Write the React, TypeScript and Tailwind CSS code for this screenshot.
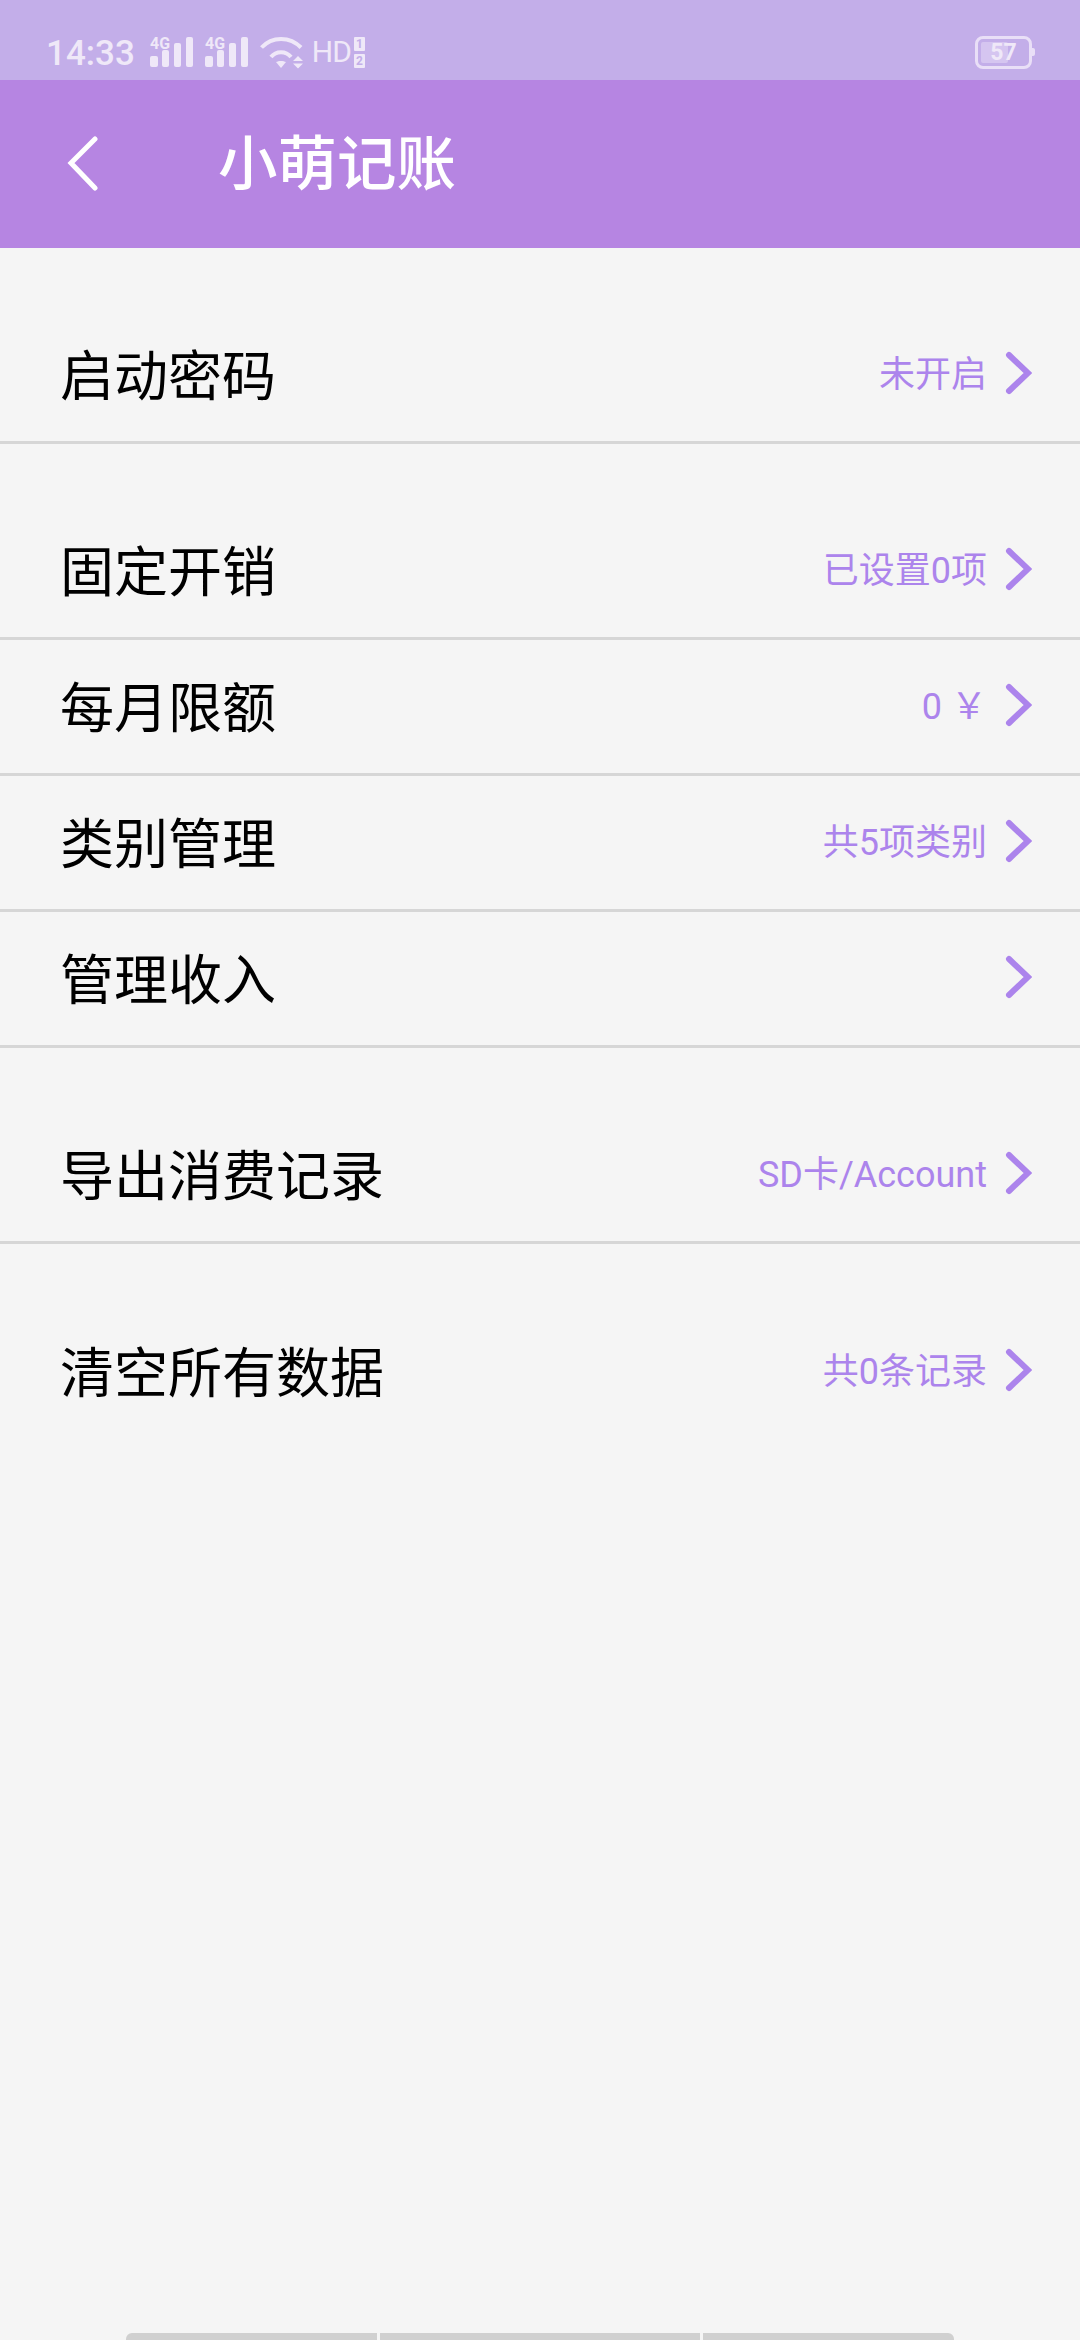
import React from "react";

const font = "font-['Roboto','Noto_Sans_CJK_SC',sans-serif]";

type Row = { title: string; value?: string };

const sections: Row[][] = [
  [{ title: "启动密码", value: "未开启" }],
  [
    { title: "固定开销", value: "已设置0项" },
    { title: "每月限额", value: "0 ￥" },
    { title: "类别管理", value: "共5项类别" },
    { title: "管理收入" },
  ],
  [{ title: "导出消费记录", value: "SD卡/Account" }],
  [{ title: "清空所有数据", value: "共0条记录" }],
];

function SignalIcon() {
  return (
    <svg width="44" height="31" viewBox="0 0 44 31" className="shrink-0 overflow-visible">
      <text x="0" y="12" fontSize="16" fontWeight="700" fill="#efe8f8" fontFamily="Roboto, sans-serif" textLength="20" lengthAdjust="spacingAndGlyphs">
        4G
      </text>
      <g fill="#efe8f8">
        <rect x="0" y="19" width="8" height="11" rx="2" />
        <rect x="12" y="13" width="7" height="17" rx="2" />
        <rect x="24" y="6" width="7" height="24" rx="2" />
        <rect x="36" y="0" width="7" height="30" rx="2" />
      </g>
    </svg>
  );
}

function WifiIcon() {
  return (
    <svg width="43" height="33" viewBox="0 0 43 33" className="shrink-0">
      <g fill="none" stroke="#efe8f8" strokeWidth="4">
        <path d="M1.5 11.5 C12 0 30 0 41 11.5" />
        <path d="M11 21 C16 14.5 26 14.5 31 21" />
      </g>
      <path d="M16 26 C18.5 24.5 23.5 24.5 26 26 L21 32 Z" fill="#efe8f8" />
      <path d="M33 25 L38 20 L43 25 Z M33 27.5 L43 27.5 L38 32.5 Z" fill="#efe8f8" />
    </svg>
  );
}

function HdIcon() {
  return (
    <div className="-ml-[2px] flex items-center gap-[3px]">
      <span className="text-[30px] leading-none tracking-[-1px] text-[#efe8f8]">HD</span>
      <div className="flex h-[31px] w-[11px] flex-col gap-[3px]">
        <span className="flex-1 rounded-[1px] bg-[#efe8f8] text-center text-[12px] font-bold leading-[14px] text-[#c3aee9]">1</span>
        <span className="flex-1 rounded-[1px] bg-[#efe8f8] text-center text-[12px] font-bold leading-[14px] text-[#c3aee9]">2</span>
      </div>
    </div>
  );
}

function Battery() {
  return (
    <div className="flex items-center">
      <div className="relative flex h-[33px] w-[57px] items-center justify-center rounded-[8px] border-[3px] border-[#e9dff7]">
        <div className="absolute bottom-[3px] left-[3px] top-[3px] w-[27px] rounded-[2px] bg-[#d5c5f0]" />
        <span className="relative text-[23px] font-bold leading-none text-[#efe8f8]">57</span>
      </div>
      <div className="h-[8px] w-[3px] rounded-r-[2px] bg-[#e9dff7]" />
    </div>
  );
}

function SettingRow({ row, divider }: { row: Row; divider: boolean }) {
  return (
    <div
      className={`flex h-[136px] items-center justify-between pl-[60px] pr-[48px] ${
        divider ? "border-b-[3px] border-[#d6d6d6]" : ""
      }`}
    >
      <span className="mt-[6px] text-[54px] leading-none text-black">{row.title}</span>
      <div className="flex items-center gap-[17px]">
        {row.value && <span className="text-[36px] leading-none text-[#ac84ec]">{row.value}</span>}
        <svg width="28" height="46" viewBox="0 0 28 46" className="mb-[4px]">
          <path d="M5 5 L24 23 L5 41" fill="none" stroke="#ac84ec" strokeWidth="6" strokeLinecap="round" />
        </svg>
      </div>
    </div>
  );
}

export default function App() {
  return (
    <div className={`flex h-[2340px] w-[1080px] flex-col overflow-hidden bg-[#f5f5f5] ${font}`}>
      {/* Status bar */}
      <div className="flex h-[80px] shrink-0 items-center justify-between bg-[#c3aee9] pl-[46px] pr-[45px] pt-[24px]">
        <div className="flex items-center gap-[11px]">
          <span className="mr-[4px] mt-[2px] text-[35px] font-medium leading-none text-[#efe8f8]">14:33</span>
          <SignalIcon />
          <SignalIcon />
          <WifiIcon />
          <HdIcon />
        </div>
        <Battery />
      </div>

      {/* Header */}
      <div className="flex h-[168px] shrink-0 items-center bg-[#b685e2] pl-[67px]">
        <svg width="32" height="56" viewBox="0 0 32 56" className="shrink-0">
          <path d="M28 3 L4 27 L28 52" fill="none" stroke="#ffffff" strokeWidth="5" strokeLinecap="round" />
        </svg>
        <span className="ml-[119px] mt-[3px] text-[59.5px] font-medium leading-none text-white">小萌记账</span>
      </div>

      {/* Settings */}
      <div className="flex flex-col">
        {sections.map((rows, i) => (
          <div key={i} className="mt-[60px] flex flex-col">
            {rows.map((row) => (
              <SettingRow key={row.title} row={row} divider={i < sections.length - 1} />
            ))}
          </div>
        ))}
      </div>

      {/* Scroll indicator */}
      <div className="mt-auto flex justify-center gap-[3px]">
        <div className="h-[7px] w-[251px] rounded-tl-[6px] bg-[#d0d0d0]" />
        <div className="h-[7px] w-[320px] bg-[#d0d0d0]" />
        <div className="h-[7px] w-[251px] rounded-tr-[6px] bg-[#d0d0d0]" />
      </div>
    </div>
  );
}
